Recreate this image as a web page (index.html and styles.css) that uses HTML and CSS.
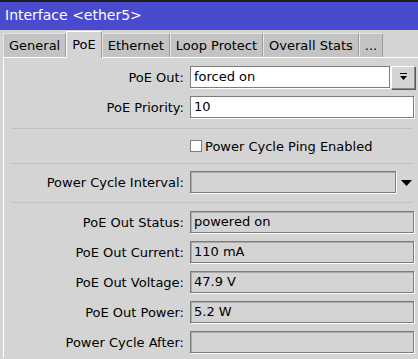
FILE: index.html
```html
<!DOCTYPE html>
<html lang="en">

<head>
    <meta charset="UTF-8">
    <title>Interface &lt;ether5&gt;</title>
    <link rel="stylesheet" href="styles.css">
</head>

<body>
    <div class="topline"></div>
    <div class="titlebar">Interface &lt;ether5&gt;</div>

    <div class="tabs">
        <div class="tab">General</div>
        <div class="tab active">PoE</div>
        <div class="tab">Ethernet</div>
        <div class="tab">Loop Protect</div>
        <div class="tab">Overall Stats</div>
        <div class="tab">...</div>
    </div>

    <div class="panel">
        <div class="row">
            <label>PoE Out:</label>
            <div class="field white with-btn">forced on</div>
            <div class="drop-btn">
                <svg width="9" height="8" viewBox="0 0 9 8"><rect x="1" y="0" width="7" height="1" fill="#000"/><path d="M1 3h7L4.5 7z" fill="#000"/></svg>
            </div>
        </div>
        <div class="row">
            <label>PoE Priority:</label>
            <div class="field white">10</div>
        </div>

        <div class="sep"></div>

        <div class="check-row">
            <span class="checkbox"></span>
            <span>Power Cycle Ping Enabled</span>
        </div>

        <div class="sep flush"></div>

        <div class="row interval">
            <label>Power Cycle Interval:</label>
            <div class="field ro short"></div>
            <div class="arrow">
                <svg width="11" height="6" viewBox="0 0 11 6"><path d="M0 0h11L5.5 6z" fill="#000"/></svg>
            </div>
        </div>

        <div class="sep low"></div>

        <div class="row">
            <label>PoE Out Status:</label>
            <div class="field ro">powered on</div>
        </div>
        <div class="row">
            <label>PoE Out Current:</label>
            <div class="field ro">110 mA</div>
        </div>
        <div class="row">
            <label>PoE Out Voltage:</label>
            <div class="field ro">47.9 V</div>
        </div>
        <div class="row">
            <label>PoE Out Power:</label>
            <div class="field ro">5.2 W</div>
        </div>
        <div class="row">
            <label>Power Cycle After:</label>
            <div class="field ro"></div>
        </div>
    </div>
</body>

</html>
```

FILE: styles.css
```css
body {
    margin: 0;
    background-color: #d4d4d4;
    font-family: 'DejaVu Sans', Verdana, sans-serif;
    font-size: 12px;
    color: #000;
    overflow: hidden;
}

.topline {
    height: 2px;
    background-color: #1a1a1a;
}

.titlebar {
    height: 28px;
    line-height: 27px;
    background-color: #4a4acf;
    color: white;
    font-size: 14px;
    padding-left: 5px;
}

.tabs {
    display: flex;
    align-items: flex-end;
    height: 27px;
    padding-left: 3px;
}

.tab {
    height: 24px;
    line-height: 24px;
    padding: 0 5px;
    background-color: #c3c3c3;
    border-top: 1px solid #e6e6e6;
    border-left: 1px solid #e6e6e6;
    border-right: 1px solid #9a9a9a;
    font-size: 13px;
    box-sizing: border-box;
}

.tab.active {
    height: 27px;
    line-height: 26px;
    background-color: #d4d4d4;
    border-top: 1px solid #fff;
    border-left: 1px solid #fff;
    margin-bottom: -1px;
    position: relative;
    z-index: 1;
}

.panel {
    margin-left: 3px;
    border-top: 1px solid #fff;
    border-left: 1px solid #fff;
    height: 300px;
    overflow: hidden;
}

.row {
    display: flex;
    align-items: center;
    height: 22px;
    margin-top: 8px;
}

.row label {
    width: 180px;
    text-align: right;
    padding-right: 6px;
    font-size: 13px;
    flex-shrink: 0;
}

.field {
    box-sizing: border-box;
    width: 224px;
    height: 22px;
    line-height: 20px;
    padding-left: 3px;
    border: 1px solid #7c7c7c;
    box-shadow: 1px 1px 0 #fff;
    font-size: 13px;
}

.field.white {
    background-color: #fff;
}

.field.with-btn {
    width: 200px;
}

.field.ro {
    background-color: #d4d4d4;
    box-shadow: 1px 1px 0 #fff, inset 1px 1px 0 #a9a9a9;
}

.field.short {
    width: 206px;
}

.drop-btn {
    box-sizing: border-box;
    width: 24px;
    height: 23px;
    margin-left: 1px;
    border: 1px solid #8a8a8a;
    border-top-color: #fff;
    border-left-color: #fff;
    box-shadow: 1px 1px 0 #5a5a5a;
    display: flex;
    align-items: center;
    justify-content: center;
}

.arrow {
    margin-left: 5px;
    display: flex;
    align-items: center;
    padding-top: 2px;
}

.sep {
    margin: 10px 0 0 7px;
    width: 402px;
    border-top: 1px solid #c2c2c2;
}

.sep.flush {
    margin-top: 0;
}

.sep.low {
    margin-top: 9px;
}

.check-row {
    display: flex;
    align-items: center;
    height: 34px;
    padding-left: 186px;
    font-size: 13px;
}

.checkbox {
    box-sizing: border-box;
    width: 12px;
    height: 12px;
    background-color: #fff;
    border: 1px solid #7c7c7c;
    margin-right: 3px;
}

.row.interval {
    margin-top: 7px;
}
```
